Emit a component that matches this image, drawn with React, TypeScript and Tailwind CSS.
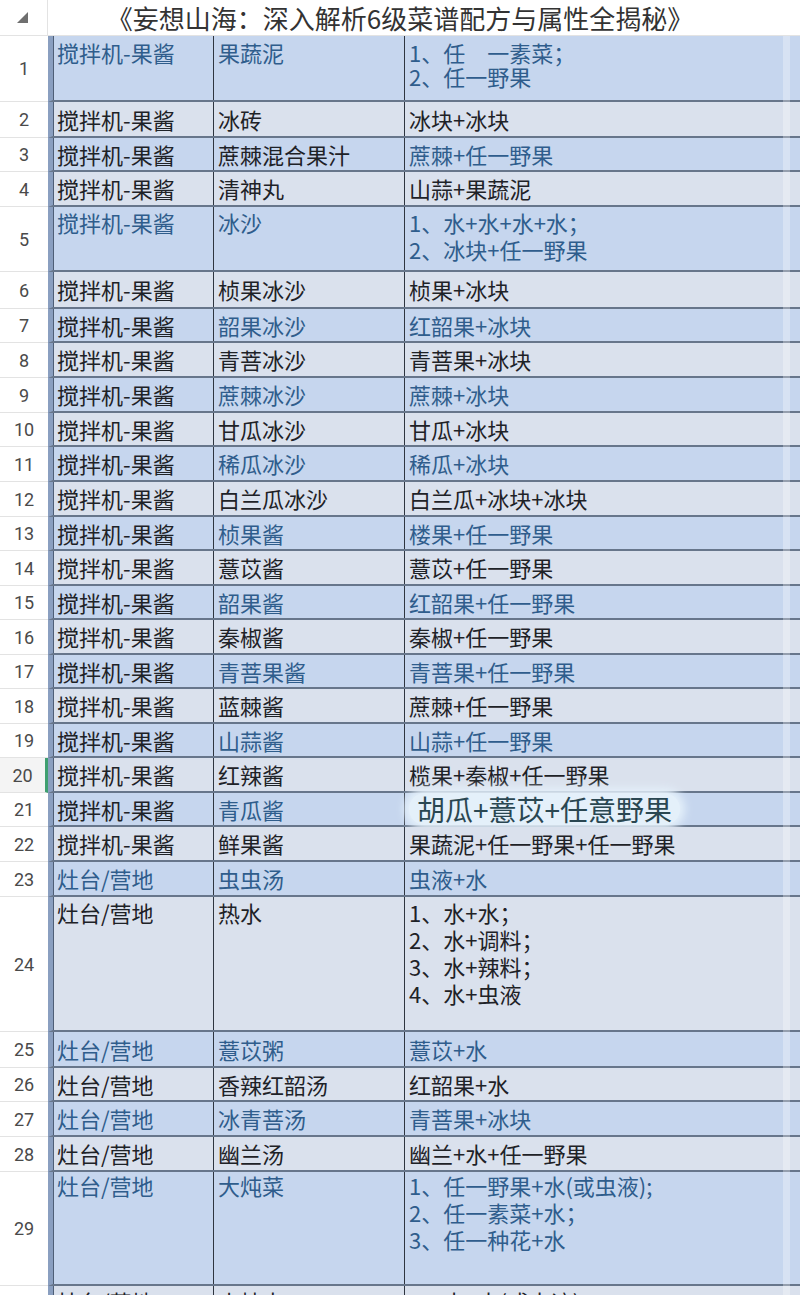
type Row = {
  n: number;
  h: string;
  a: string;
  b: string;
  c: string[];
  blue: [boolean, boolean, boolean];
  tall?: string;
  glow?: boolean;
  sel?: boolean;
};

const J = "搅拌机-果酱";
const Z = "灶台/营地";

// tall rows carry their own top padding / line height
const T = "justify-start pt-[2px] leading-[27px]";

const rows: Row[] = [
  { n: 1, h: "h-[66px]", a: J, b: "果蔬泥", c: ["1、任　一素菜；", "2、任一野果"], blue: [true, true, true], tall: "justify-start pt-[4px] leading-[24px]" },
  { n: 2, h: "h-[36px]", a: J, b: "冰砖", c: ["冰块+冰块"], blue: [false, false, false] },
  { n: 3, h: "h-[34px]", a: J, b: "蔗棘混合果汁", c: ["蔗棘+任一野果"], blue: [false, false, true] },
  { n: 4, h: "h-[35px]", a: J, b: "清神丸", c: ["山蒜+果蔬泥"], blue: [false, false, false] },
  { n: 5, h: "h-[65px]", a: J, b: "冰沙", c: ["1、水+水+水+水；", "2、冰块+任一野果"], blue: [true, true, true], tall: T },
  { n: 6, h: "h-[37px]", a: J, b: "桢果冰沙", c: ["桢果+冰块"], blue: [false, false, false] },
  { n: 7, h: "h-[34px]", a: J, b: "韶果冰沙", c: ["红韶果+冰块"], blue: [false, true, true] },
  { n: 8, h: "h-[35px]", a: J, b: "青菩冰沙", c: ["青菩果+冰块"], blue: [false, false, false] },
  { n: 9, h: "h-[35px]", a: J, b: "蔗棘冰沙", c: ["蔗棘+冰块"], blue: [false, true, true] },
  { n: 10, h: "h-[34px]", a: J, b: "甘瓜冰沙", c: ["甘瓜+冰块"], blue: [false, false, false] },
  { n: 11, h: "h-[35px]", a: J, b: "稀瓜冰沙", c: ["稀瓜+冰块"], blue: [false, true, true] },
  { n: 12, h: "h-[35px]", a: J, b: "白兰瓜冰沙", c: ["白兰瓜+冰块+冰块"], blue: [false, false, false] },
  { n: 13, h: "h-[34px]", a: J, b: "桢果酱", c: ["楼果+任一野果"], blue: [false, true, true] },
  { n: 14, h: "h-[35px]", a: J, b: "薏苡酱", c: ["薏苡+任一野果"], blue: [false, false, false] },
  { n: 15, h: "h-[34px]", a: J, b: "韶果酱", c: ["红韶果+任一野果"], blue: [false, true, true] },
  { n: 16, h: "h-[35px]", a: J, b: "秦椒酱", c: ["秦椒+任一野果"], blue: [false, false, false] },
  { n: 17, h: "h-[34px]", a: J, b: "青菩果酱", c: ["青菩果+任一野果"], blue: [false, true, true] },
  { n: 18, h: "h-[35px]", a: J, b: "蓝棘酱", c: ["蔗棘+任一野果"], blue: [false, false, false] },
  { n: 19, h: "h-[34px]", a: J, b: "山蒜酱", c: ["山蒜+任一野果"], blue: [false, true, true] },
  { n: 20, h: "h-[35px]", a: J, b: "红辣酱", c: ["榄果+秦椒+任一野果"], blue: [false, false, false], sel: true },
  { n: 21, h: "h-[34px]", a: J, b: "青瓜酱", c: ["胡瓜+薏苡+任意野果"], blue: [false, true, false], glow: true },
  { n: 22, h: "h-[35px]", a: J, b: "鲜果酱", c: ["果蔬泥+任一野果+任一野果"], blue: [false, false, false] },
  { n: 23, h: "h-[35px]", a: Z, b: "虫虫汤", c: ["虫液+水"], blue: [true, true, true] },
  { n: 24, h: "h-[135px]", a: Z, b: "热水", c: ["1、水+水；", "2、水+调料；", "3、水+辣料；", "4、水+虫液"], blue: [false, false, false], tall: T },
  { n: 25, h: "h-[36px]", a: Z, b: "薏苡粥", c: ["薏苡+水"], blue: [true, true, true] },
  { n: 26, h: "h-[34px]", a: Z, b: "香辣红韶汤", c: ["红韶果+水"], blue: [false, false, false] },
  { n: 27, h: "h-[35px]", a: Z, b: "冰青菩汤", c: ["青菩果+冰块"], blue: [true, true, true] },
  { n: 28, h: "h-[35px]", a: Z, b: "幽兰汤", c: ["幽兰+水+任一野果"], blue: [false, false, false] },
  { n: 29, h: "h-[114px]", a: Z, b: "大炖菜", c: ["1、任一野果+水(或虫液);", "2、任一素菜+水；", "3、任一种花+水"], blue: [true, true, true], tall: "justify-start pt-0 leading-[27px]" },
  { n: 30, h: "h-[120px]", a: Z, b: "小炖虫", c: ["1、虫+水(或虫液);", "2、虫+水；"], blue: [false, false, false], tall: T },
];

const tone = (b: boolean) => (b ? "text-[#2f5d8c]" : "text-[#1e2227]");

function Cell({ lines, blue, tall, cls }: { lines: string[]; blue: boolean; tall?: string; cls: string }) {
  return (
    <div className={`${cls} flex flex-col px-[4px] ${tone(blue)} ${tall ?? "justify-center leading-[27px]"}`}>
      {lines.map((l, i) => (
        <div key={i} className="whitespace-nowrap">
          {l}
        </div>
      ))}
    </div>
  );
}

function SheetRow({ r }: { r: Row }) {
  const bg = r.n % 2 === 1 ? "bg-[#c6d6ee]" : "bg-[#dae1ed]";
  return (
    <div className={`flex ${r.h}`}>
      <div
        className={`w-[48px] shrink-0 flex items-center justify-center border-b border-[#e3e3e3] font-['Roboto',sans-serif] text-[18px] text-[#4a4a4a] ${
          r.sel ? "border-r-[3px] border-r-[#3f9f70] bg-[#f4f4f4]" : "bg-white"
        }`}
      >
        {r.n}
      </div>
      <div
        className={`flex flex-1 border-l-[5px] border-l-[#8a9fc0] border-b-2 border-b-[#67768b] shadow-[inset_1px_0_0_#4e5e76] ${bg}`}
      >
        <Cell cls="w-[161px] shrink-0 border-r border-[#2e3540]" lines={[r.a]} blue={r.blue[0]} tall={r.tall} />
        <Cell cls="w-[191px] shrink-0 border-r border-[#2e3540]" lines={[r.b]} blue={r.blue[1]} tall={r.tall} />
        {r.glow ? (
          <div className="flex-1 flex items-center pl-[4px]">
            <span className="rounded-full bg-[#e4f0fa] px-[8px] text-[28px] leading-[32px] text-[#2a4752] shadow-[0_0_8px_5px_#e4f0fa]">
              {r.c[0]}
            </span>
          </div>
        ) : (
          <Cell cls="flex-1" lines={r.c} blue={r.blue[2]} tall={r.tall} />
        )}
      </div>
    </div>
  );
}

export default function App() {
  return (
    <div className="relative w-[800px] h-[1295px] overflow-hidden bg-white font-['Noto_Sans_CJK_SC','Noto_Sans',sans-serif] text-[22px]">
      <div className="flex h-[36px] border-b border-[#e3e3e3]">
        <div className="w-[48px] shrink-0 flex items-start justify-start pl-[17px] pt-[12px] border-r border-[#e3e3e3]">
          <svg width="11" height="11" viewBox="0 0 11 11">
            <polygon points="11,0 11,11 0,11" fill="#6f6f6f" />
          </svg>
        </div>
        <div className="flex-1 flex items-center justify-center pr-[48px]">
          <span className="text-[26px] leading-[34px] text-[#333333] bg-white">
            《妄想山海：深入解析6级菜谱配方与属性全揭秘》
          </span>
        </div>
      </div>
      {rows.map((r) => (
        <SheetRow key={r.n} r={r} />
      ))}
      <div className="absolute top-[36px] bottom-0 right-[10px] w-[7px] bg-white/30" />
    </div>
  );
}
